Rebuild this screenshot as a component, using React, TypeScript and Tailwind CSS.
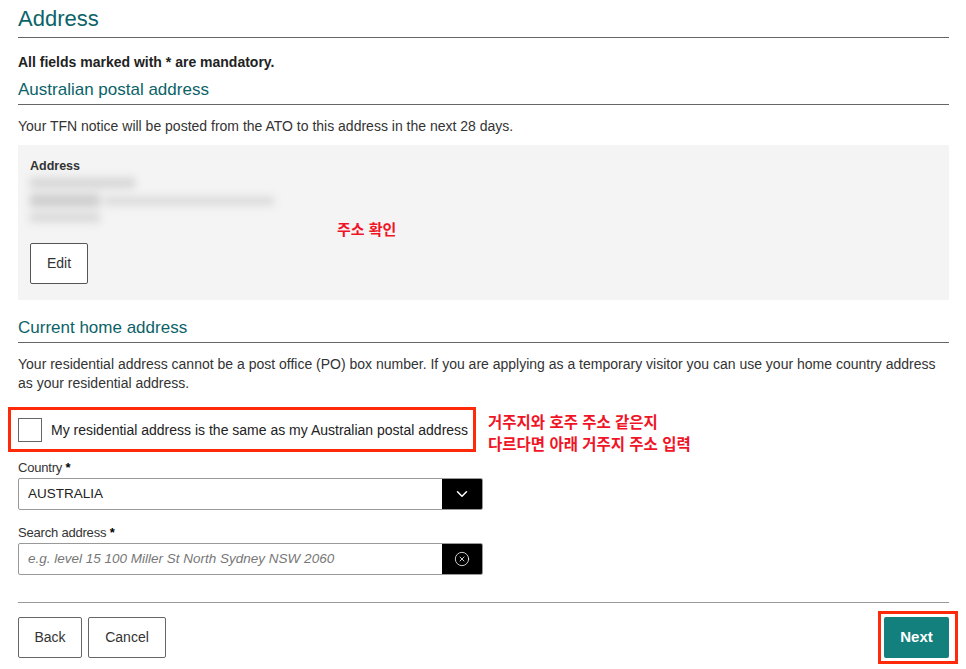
import { ChevronDown, CircleX } from "lucide-react";

const font = { fontFamily: '"Liberation Sans", "Noto Sans CJK KR", Arial, sans-serif' };

function SectionTitle({ children }: { children: React.ReactNode }) {
  return (
    <h2 className="text-[17px] leading-[22px] text-[#0b6369] pb-[3px] border-b border-[#666]">
      {children}
    </h2>
  );
}

function Label({ children }: { children: React.ReactNode }) {
  return (
    <div className="text-[13px] leading-[18px] text-[#333] tracking-[-0.2px]">
      {children} <span className="font-bold text-black">*</span>
    </div>
  );
}

export default function App() {
  return (
    <div className="w-[966px] h-[669px] bg-white overflow-hidden text-[#222]" style={font}>
      <div className="pl-[18px] w-[949px]">
        <h1 className="pt-[6px] pb-[5px] text-[22px] leading-[26px] text-[#0b6369] border-b border-[#666]">
          Address
        </h1>

        <p className="mt-[15px] text-[14px] leading-[18px] font-bold">
          All fields marked with * are mandatory.
        </p>

        <div className="mt-[8px]">
          <SectionTitle>Australian postal address</SectionTitle>
        </div>

        <p className="mt-[11px] text-[14px] leading-[20px] text-[#333]">
          Your TFN notice will be posted from the ATO to this address in the next 28 days.
        </p>

        <div className="relative mt-[9px] h-[155px] bg-[#f4f4f4] px-[12px] pt-[13px]">
          <div className="text-[12.5px] leading-[16px] font-bold text-[#333]">Address</div>
          <div className="mt-[4px] flex flex-col gap-[6px] blur-[4px]">
            <div className="h-[10px] w-[105px] bg-[#d4d4d4]" />
            <div className="flex gap-[4px]">
              <div className="h-[13px] w-[70px] bg-[#cdcdcd]" />
              <div className="h-[8px] mt-[3px] w-[170px] bg-[#d8d8d8]" />
            </div>
            <div className="h-[9px] w-[70px] bg-[#d6d6d6]" />
          </div>
          <button className="mt-[21px] h-[41px] w-[58px] rounded-[2px] border border-[#555] bg-white text-[14px] text-[#333]">
            Edit
          </button>
          <span className="absolute left-[319px] top-[74px] text-[15px] font-bold text-[#f01426]">
            주소 확인
          </span>
        </div>

        <div className="mt-[17px]">
          <SectionTitle>Current home address</SectionTitle>
        </div>

        <p className="mt-[12px] text-[14px] leading-[19px] text-[#333]">
          Your residential address cannot be a post office (PO) box number. If you are applying as a temporary visitor you can use your home country address as your residential address.
        </p>

        <div className="mt-[14px] flex items-start h-[45px]">
          <label className="-ml-[10px] h-[45px] flex items-center gap-[9px] border-[3px] border-[#ff2a0a] pl-[7px] pr-[5px]">
            <span className="block h-[24px] w-[24px] border border-[#666] bg-white" />
            <span className="text-[14px] leading-[20px] text-[#222]">
              My residential address is the same as my Australian postal address
            </span>
          </label>
          <div className="ml-[12px] mt-[5px] text-[15.5px] leading-[22px] font-bold text-[#f01426]">
            <div>거주지와 호주 주소 같은지</div>
            <div>다르다면 아래 거주지 주소 입력</div>
          </div>
        </div>

        <div className="mt-[7px] w-[465px]">
          <Label>Country</Label>
          <div className="mt-[1px] flex h-[32px] rounded-[2px] border border-[#999] overflow-hidden">
            <div className="flex-1 flex items-center px-[9px] text-[13.5px] text-[#222]">AUSTRALIA</div>
            <div className="w-[40px] bg-black flex items-center justify-center">
              <ChevronDown className="w-[18px] h-[18px] text-white" strokeWidth={2} />
            </div>
          </div>

          <div className="mt-[14px]">
            <Label>Search address</Label>
          </div>
          <div className="mt-[1px] flex h-[32px] rounded-[2px] border border-[#999] overflow-hidden">
            <div className="flex-1 flex items-center px-[9px] text-[13.5px] italic text-[#777]">
              e.g. level 15 100 Miller St North Sydney NSW 2060
            </div>
            <div className="w-[40px] bg-black flex items-center justify-center">
              <CircleX className="w-[16px] h-[16px] text-white" strokeWidth={1.2} />
            </div>
          </div>
        </div>

        <div className="mt-[27px] border-t border-[#999]" />

        <div className="mt-[8px] flex items-start justify-between">
          <div className="flex gap-[6px] mt-[6px]">
            <button className="h-[41px] w-[64px] rounded-[2px] border border-[#666] bg-white text-[14px] text-[#333]">
              Back
            </button>
            <button className="h-[41px] w-[78px] rounded-[2px] border border-[#666] bg-white text-[14px] text-[#333]">
              Cancel
            </button>
          </div>
          <div className="-mr-[9px] border-[3px] border-[#ff2a0a] pl-[3px] pr-[6px] py-[3px] bg-white">
            <button className="block h-[41px] w-[65px] rounded-[2px] bg-[#13807d] text-[15px] font-bold text-white">
              Next
            </button>
          </div>
        </div>
      </div>
    </div>
  );
}
